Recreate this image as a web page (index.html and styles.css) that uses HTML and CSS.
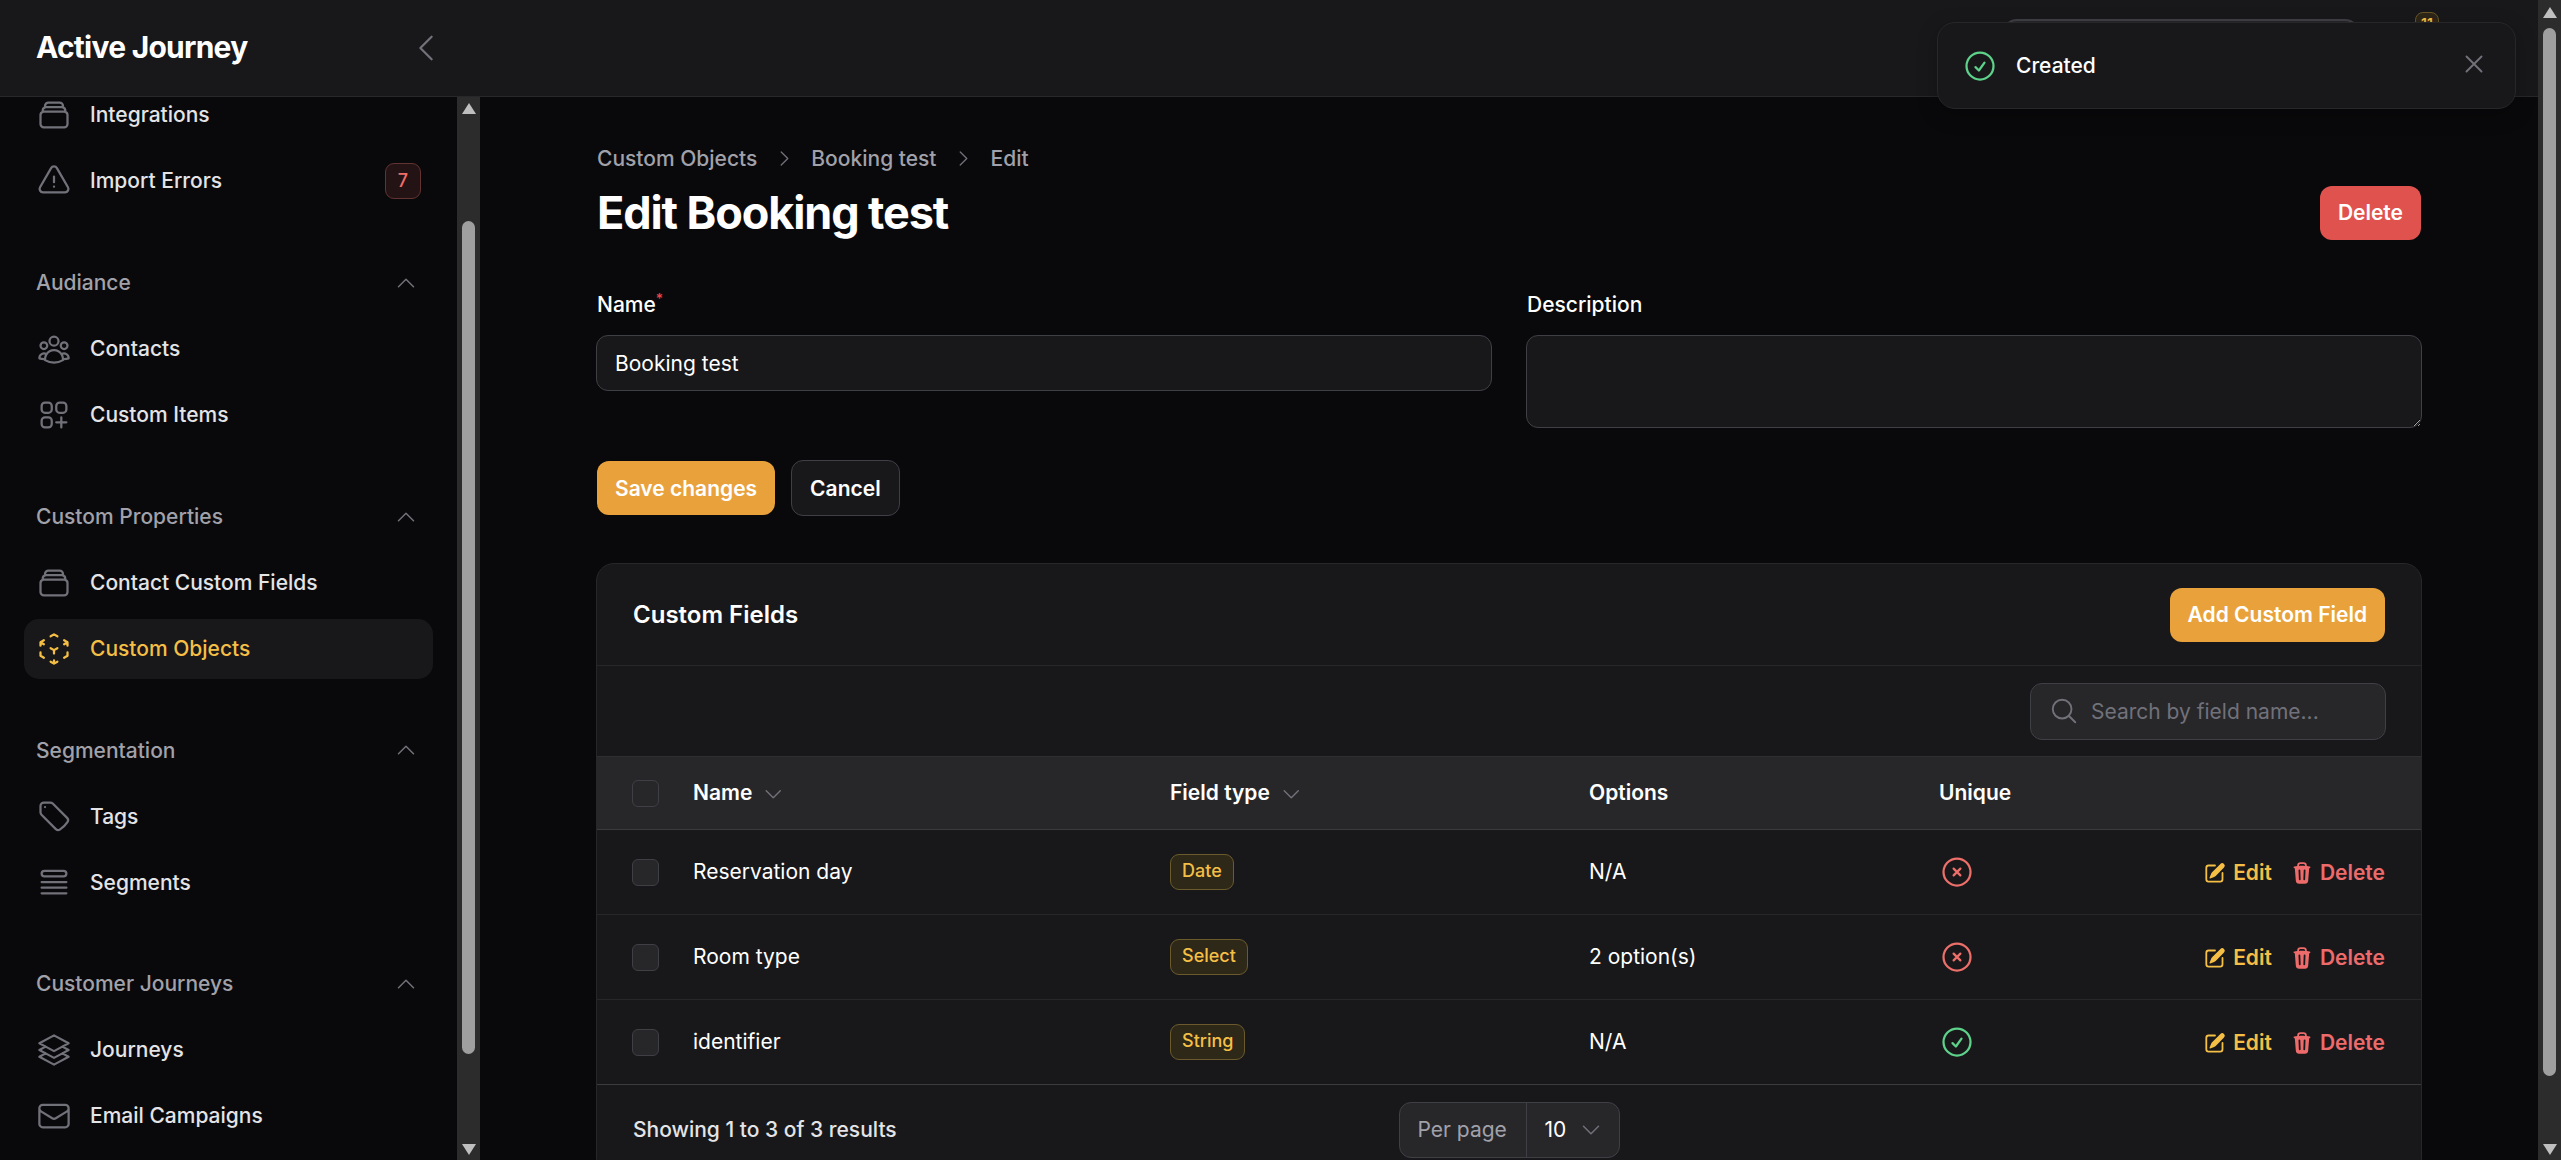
FILE: index.html
```html
<!DOCTYPE html>
<html lang="en">
<head>
    <meta charset="UTF-8">
    <meta name="viewport" content="width=device-width, initial-scale=1.0">
    <title>Edit Booking test</title>
    <link rel="stylesheet" href="styles.css">
</head>
<body>
    <svg class="sprite" xmlns="http://www.w3.org/2000/svg">
        <symbol id="i-stack" viewBox="0 0 24 24"><path d="M6 6.878V6a2.25 2.25 0 012.25-2.25h7.5A2.25 2.25 0 0118 6v.878m-12 0c.235-.083.487-.128.75-.128h10.5c.263 0 .515.045.75.128m-12 0A2.25 2.25 0 004.5 9v.878m13.5-3A2.25 2.25 0 0119.5 9v.878m0 0a2.246 2.246 0 00-.75-.128H5.25c-.263 0-.515.045-.75.128m15 0A2.25 2.25 0 0121 12v6a2.25 2.25 0 01-2.25 2.25H5.25A2.25 2.25 0 013 18v-6c0-.98.626-1.813 1.5-2.122"/></symbol>
        <symbol id="i-up" viewBox="0 0 24 24"><path d="M4.5 15.75l7.5-7.5 7.5 7.5"/></symbol>
        <symbol id="i-down" viewBox="0 0 24 24"><path d="M19.5 8.25l-7.5 7.5-7.5-7.5"/></symbol>
        <symbol id="i-right" viewBox="0 0 24 24"><path d="M8.25 4.5l7.5 7.5-7.5 7.5"/></symbol>
        <symbol id="i-x-circle" viewBox="0 0 24 24"><path d="M9.75 9.75l4.5 4.5m0-4.5l-4.5 4.5M21 12a9 9 0 11-18 0 9 9 0 0118 0z"/></symbol>
        <symbol id="i-check-circle" viewBox="0 0 24 24"><path d="M9 12.75L11.25 15 15 9.75M21 12a9 9 0 11-18 0 9 9 0 0118 0z"/></symbol>
        <symbol id="i-edit" viewBox="0 0 20 20"><path d="M5.433 13.917l1.262-3.155A4 4 0 017.58 9.42l6.92-6.918a2.121 2.121 0 013 3l-6.92 6.918c-.383.383-.84.685-1.343.886l-3.154 1.262a.5.5 0 01-.65-.65z"/><path d="M3.5 5.75c0-.69.56-1.25 1.25-1.25H10A.75.75 0 0010 3H4.75A2.75 2.75 0 002 5.75v9.5A2.75 2.75 0 004.75 18h9.5A2.75 2.75 0 0017 15.25V10a.75.75 0 00-1.5 0v5.25c0 .69-.56 1.25-1.25 1.25h-9.5c-.69 0-1.25-.56-1.25-1.25v-9.5z"/></symbol>
        <symbol id="i-trash" viewBox="0 0 20 20"><path fill-rule="evenodd" clip-rule="evenodd" d="M8.75 1A2.75 2.75 0 006 3.75v.443c-.795.077-1.584.176-2.365.298a.75.75 0 10.23 1.482l.149-.022.841 10.518A2.75 2.75 0 007.596 19h4.807a2.75 2.75 0 002.742-2.53l.841-10.52.149.023a.75.75 0 00.23-1.482A41.03 41.03 0 0014 4.193V3.75A2.75 2.75 0 0011.25 1h-2.5zM10 4c.84 0 1.673.025 2.5.075V3.75c0-.69-.56-1.25-1.25-1.25h-2.5c-.69 0-1.25.56-1.25 1.25v.325C8.327 4.025 9.16 4 10 4zM8.58 7.72a.75.75 0 00-1.5.06l.3 7.5a.75.75 0 101.5-.06l-.3-7.5zm4.34.06a.75.75 0 10-1.5-.06l-.3 7.5a.75.75 0 101.5.06l.3-7.5z"/></symbol>
    </svg>

    <div class="app">
        <header class="topbar">
            <div class="brand">
                <span class="brand-name">Active Journey</span>
                <svg class="brand-toggle" viewBox="0 0 24 24"><path d="M15.75 19.5L8.25 12l7.5-7.5"/></svg>
            </div>
            <div class="top-search"></div>
            <div class="top-badge">11</div>
        </header>

        <div class="layout">
            <aside class="sidebar">
                <nav class="nav">
                    <ul class="nav-list nav-first">
                        <li class="nav-item"><svg class="nav-icon"><use href="#i-stack"/></svg>Integrations</li>
                        <li class="nav-item"><svg class="nav-icon" viewBox="0 0 24 24"><path d="M12 9v3.75m-9.303 3.376c-.866 1.5.217 3.374 1.948 3.374h14.71c1.73 0 2.813-1.874 1.948-3.374L13.949 3.378c-.866-1.5-3.032-1.5-3.898 0L2.697 16.126zM12 15.75h.007v.008H12v-.008z"/></svg>Import Errors<span class="nav-badge">7</span></li>
                    </ul>
                    <section class="nav-group">
                        <div class="nav-label">Audiance<svg class="nav-caret"><use href="#i-up"/></svg></div>
                        <ul class="nav-list">
                            <li class="nav-item"><svg class="nav-icon" viewBox="0 0 24 24"><path d="M18 18.72a9.094 9.094 0 003.741-.479 3 3 0 00-4.682-2.72m.94 3.198l.001.031c0 .225-.012.447-.037.666A11.944 11.944 0 0112 21c-2.17 0-4.207-.576-5.963-1.584A6.062 6.062 0 016 18.719m12 0a5.971 5.971 0 00-.941-3.197m0 0A5.995 5.995 0 0012 12.75a5.995 5.995 0 00-5.058 2.772m0 0a3 3 0 00-4.681 2.72 8.986 8.986 0 003.74.477m.94-3.197a5.971 5.971 0 00-.94 3.197M15 6.75a3 3 0 11-6 0 3 3 0 016 0zm6 3a2.25 2.25 0 11-4.5 0 2.25 2.25 0 014.5 0zm-13.5 0a2.25 2.25 0 11-4.5 0 2.25 2.25 0 014.5 0z"/></svg>Contacts</li>
                            <li class="nav-item"><svg class="nav-icon" viewBox="0 0 24 24"><path d="M13.5 16.875h3.375m0 0h3.375m-3.375 0V13.5m0 6.75v-3.375M6 10.5h2.25a2.25 2.25 0 002.25-2.25V6a2.25 2.25 0 00-2.25-2.25H6A2.25 2.25 0 003.75 6v2.25A2.25 2.25 0 006 10.5zm0 9.75h2.25A2.25 2.25 0 0010.5 18v-2.25a2.25 2.25 0 00-2.25-2.25H6a2.25 2.25 0 00-2.25 2.25V18A2.25 2.25 0 006 20.25zm9.75-9.75H18a2.25 2.25 0 002.25-2.25V6A2.25 2.25 0 0018 3.75h-2.25A2.25 2.25 0 0013.5 6v2.25a2.25 2.25 0 002.25 2.25z"/></svg>Custom Items</li>
                        </ul>
                    </section>
                    <section class="nav-group">
                        <div class="nav-label">Custom Properties<svg class="nav-caret"><use href="#i-up"/></svg></div>
                        <ul class="nav-list">
                            <li class="nav-item"><svg class="nav-icon"><use href="#i-stack"/></svg>Contact Custom Fields</li>
                            <li class="nav-item active"><svg class="nav-icon" viewBox="0 0 24 24"><path d="M21 7.5l-2.25-1.313M21 7.5v2.25m0-2.25l-2.25 1.313M3 7.5l2.25-1.313M3 7.5l2.25 1.313M3 7.5v2.25m9 3l2.25-1.313M12 12.75l-2.25-1.313M12 12.75V15m0 6.75l2.25-1.313M12 21.75V19.5m0 2.25l-2.25-1.313m0-16.875L12 2.25l2.25 1.313M21 14.25v2.25l-2.25 1.313m-13.5 0L3 16.5v-2.25"/></svg>Custom Objects</li>
                        </ul>
                    </section>
                    <section class="nav-group">
                        <div class="nav-label">Segmentation<svg class="nav-caret"><use href="#i-up"/></svg></div>
                        <ul class="nav-list">
                            <li class="nav-item"><svg class="nav-icon" viewBox="0 0 24 24"><path d="M9.568 3H5.25A2.25 2.25 0 003 5.25v4.318c0 .597.237 1.17.659 1.591l9.581 9.581c.699.699 1.78.872 2.607.33a18.095 18.095 0 005.223-5.223c.542-.827.369-1.908-.33-2.607L11.16 3.66A2.25 2.25 0 009.568 3z"/><path d="M6 6h.008v.008H6V6z"/></svg>Tags</li>
                            <li class="nav-item"><svg class="nav-icon" viewBox="0 0 24 24"><path d="M3.75 12h16.5m-16.5 3.75h16.5m-16.5 3.75h16.5M5.625 4.5h12.75a1.875 1.875 0 010 3.75H5.625a1.875 1.875 0 010-3.75z"/></svg>Segments</li>
                        </ul>
                    </section>
                    <section class="nav-group">
                        <div class="nav-label">Customer Journeys<svg class="nav-caret"><use href="#i-up"/></svg></div>
                        <ul class="nav-list">
                            <li class="nav-item"><svg class="nav-icon" viewBox="0 0 24 24"><path d="M6.429 9.75L2.25 12l4.179 2.25m0-4.5l5.571 3 5.571-3m-11.142 0L2.25 7.5 12 2.25l9.75 5.25-4.179 2.25m0 0L21.75 12l-4.179 2.25m0 0l4.179 2.25L12 21.75 2.25 16.5l4.179-2.25m11.142 0l-5.571 3-5.571-3"/></svg>Journeys</li>
                            <li class="nav-item"><svg class="nav-icon" viewBox="0 0 24 24"><path d="M21.75 6.75v10.5a2.25 2.25 0 01-2.25 2.25h-15a2.25 2.25 0 01-2.25-2.25V6.75m19.5 0A2.25 2.25 0 0019.5 4.5h-15a2.25 2.25 0 00-2.25 2.25m19.5 0v.243a2.25 2.25 0 01-1.07 1.916l-7.5 4.615a2.25 2.25 0 01-2.36 0L3.32 8.91a2.25 2.25 0 01-1.07-1.916V6.75"/></svg>Email Campaigns</li>
                        </ul>
                    </section>
                </nav>
                <div class="scrollbar side-scroll"><span class="arrow-up"></span><span class="thumb"></span><span class="arrow-down"></span></div>
            </aside>

            <main class="main">
                <div class="breadcrumbs">
                    <span>Custom Objects</span><svg class="crumb-sep"><use href="#i-right"/></svg>
                    <span>Booking test</span><svg class="crumb-sep"><use href="#i-right"/></svg>
                    <span>Edit</span>
                </div>
                <div class="page-head">
                    <h1>Edit Booking test</h1>
                    <button class="btn btn-danger" type="button">Delete</button>
                </div>

                <form class="form-grid">
                    <div class="field">
                        <label for="name">Name<sup class="req">*</sup></label>
                        <input id="name" type="text" value="Booking test">
                    </div>
                    <div class="field">
                        <label for="description">Description</label>
                        <textarea id="description"></textarea>
                    </div>
                </form>
                <div class="form-actions">
                    <button class="btn btn-primary" type="button">Save changes</button>
                    <button class="btn btn-ghost" type="button">Cancel</button>
                </div>

                <section class="card">
                    <div class="card-head">
                        <h2>Custom Fields</h2>
                        <button class="btn btn-primary" type="button">Add Custom Field</button>
                    </div>
                    <div class="card-tools">
                        <div class="search">
                            <svg class="search-icon" viewBox="0 0 24 24"><path d="M21 21l-5.197-5.197m0 0A7.5 7.5 0 105.196 5.196a7.5 7.5 0 0010.607 10.607z"/></svg>
                            <input type="text" placeholder="Search by field name...">
                        </div>
                    </div>
                    <table class="fields">
                        <colgroup>
                            <col class="col-check"><col class="col-name"><col class="col-type"><col class="col-options"><col class="col-unique"><col>
                        </colgroup>
                        <thead>
                            <tr>
                                <th><span class="check"></span></th>
                                <th>Name<svg class="sort"><use href="#i-down"/></svg></th>
                                <th>Field type<svg class="sort"><use href="#i-down"/></svg></th>
                                <th>Options</th>
                                <th>Unique</th>
                                <th></th>
                            </tr>
                        </thead>
                        <tbody>
                            <tr>
                                <td><span class="check"></span></td>
                                <td>Reservation day</td>
                                <td><span class="tag">Date</span></td>
                                <td>N/A</td>
                                <td><svg class="state state-no"><use href="#i-x-circle"/></svg></td>
                                <td class="actions"><a class="act act-edit"><svg><use href="#i-edit"/></svg>Edit</a><a class="act act-del"><svg><use href="#i-trash"/></svg>Delete</a></td>
                            </tr>
                            <tr>
                                <td><span class="check"></span></td>
                                <td>Room type</td>
                                <td><span class="tag">Select</span></td>
                                <td>2 option(s)</td>
                                <td><svg class="state state-no"><use href="#i-x-circle"/></svg></td>
                                <td class="actions"><a class="act act-edit"><svg><use href="#i-edit"/></svg>Edit</a><a class="act act-del"><svg><use href="#i-trash"/></svg>Delete</a></td>
                            </tr>
                            <tr>
                                <td><span class="check"></span></td>
                                <td>identifier</td>
                                <td><span class="tag">String</span></td>
                                <td>N/A</td>
                                <td><svg class="state state-yes"><use href="#i-check-circle"/></svg></td>
                                <td class="actions"><a class="act act-edit"><svg><use href="#i-edit"/></svg>Edit</a><a class="act act-del"><svg><use href="#i-trash"/></svg>Delete</a></td>
                            </tr>
                        </tbody>
                    </table>
                    <div class="card-foot">
                        <span class="results">Showing 1 to 3 of 3 results</span>
                        <div class="per-page">
                            <span class="per-label">Per page</span>
                            <span class="per-value">10<svg class="per-caret"><use href="#i-down"/></svg></span>
                        </div>
                    </div>
                </section>
            </main>
        </div>
    </div>

    <div class="scrollbar page-scroll"><span class="arrow-up"></span><span class="thumb"></span><span class="arrow-down"></span></div>

    <div class="toast">
        <svg class="toast-icon"><use href="#i-check-circle"/></svg>
        <span class="toast-text">Created</span>
        <svg class="toast-close" viewBox="0 0 24 24"><path d="M6 18L18 6M6 6l12 12"/></svg>
    </div>
</body>
</html>
```

FILE: styles.css
```css
* {
    box-sizing: border-box;
}
html, body {
    height: 100%;
}
body {
    margin: 0;
    display: flex;
    overflow: hidden;
    background-color: #09090b;
    color: #fff;
    font-family: Inter, "Noto Sans", sans-serif;
    font-size: 21px;
    line-height: 31.5px;
}
svg {
    fill: none;
    stroke: currentColor;
    stroke-width: 1.5;
    stroke-linecap: round;
    stroke-linejoin: round;
    flex: none;
}
ul {
    list-style: none;
    margin: 0;
    padding: 0;
}
.sprite {
    display: none;
}
.app {
    flex: 1;
    min-width: 0;
    display: flex;
    flex-direction: column;
}

/* top bar */
.topbar {
    height: 97px;
    flex: none;
    display: flex;
    align-items: center;
    background-color: #18181b;
    border-bottom: 1px solid #27272a;
}
.brand {
    width: 458px;
    flex: none;
    display: flex;
    align-items: center;
    justify-content: space-between;
    padding: 0 14px 0 36px;
}
.brand-name {
    font-size: 30px;
    font-weight: 700;
    letter-spacing: -0.75px;
}
.brand-toggle {
    width: 36px;
    height: 36px;
    color: #71717a;
}
.top-search {
    width: 358px;
    height: 58px;
    margin-left: 1544px;
    background-color: #27272a;
    border: 2px solid #3f3f46;
    border-radius: 15px;
}
.top-badge {
    width: 24px;
    height: 24px;
    margin: -48px 0 0 55px;
    border: 1px solid #6b5526;
    border-radius: 8px;
    background-color: #2e2718;
    color: #f5bf45;
    font-size: 14px;
    font-weight: 600;
    line-height: 22px;
    text-align: center;
}

.layout {
    flex: 1;
    min-height: 0;
    display: flex;
}

/* sidebar */
.sidebar {
    width: 480px;
    flex: none;
    display: flex;
    overflow: hidden;
}
.nav {
    flex: 1;
    min-width: 0;
    padding: 0 24px;
    overflow: hidden;
}
.nav-first {
    margin-top: -12px;
}
.nav-list {
    display: flex;
    flex-direction: column;
    gap: 6px;
}
.nav-item {
    height: 60px;
    display: flex;
    align-items: center;
    gap: 18px;
    padding: 0 12px;
    border-radius: 15px;
    color: #e4e4e7;
    font-weight: 500;
}
.nav-item.active {
    background-color: #18181b;
    color: #f5bf45;
}
.nav-icon {
    width: 36px;
    height: 36px;
    color: #71717a;
}
.nav-item.active .nav-icon {
    color: #f5bf45;
}
.nav-badge {
    width: 36px;
    height: 36px;
    margin-left: auto;
    border: 1.5px solid #633232;
    border-radius: 9px;
    background-color: #241314;
    color: #f26d68;
    font-size: 18px;
    line-height: 33px;
    text-align: center;
}
.nav-group {
    margin-top: 53.8px;
}
.nav-label {
    height: 36px;
    display: flex;
    align-items: center;
    justify-content: space-between;
    margin-bottom: 18px;
    padding: 0 12px;
    color: #a1a1aa;
    font-weight: 500;
}
.nav-caret {
    width: 24px;
    height: 24px;
    margin-right: 3px;
    color: #71717a;
}

/* fake scrollbars, the browser hides its own in this capture */
.scrollbar {
    width: 23px;
    flex: none;
    display: flex;
    flex-direction: column;
    align-items: center;
    justify-content: space-between;
    background-color: #2c2c2c;
    padding: 7px 0 5px;
}
.thumb {
    width: 13px;
    border-radius: 7px;
    background-color: #9f9f9f;
}
.arrow-up, .arrow-down {
    width: 0;
    height: 0;
    border-left: 7px solid transparent;
    border-right: 7px solid transparent;
}
.arrow-up {
    border-bottom: 11px solid #bfbfbf;
}
.arrow-down {
    border-top: 11px solid #bfbfbf;
}
.side-scroll {
    padding-top: 6px;
}
.side-scroll .thumb {
    height: 833px;
    margin-top: 106px;
    margin-bottom: 90px;
}
.page-scroll .thumb {
    height: 1048px;
    margin-top: 10px;
    margin-bottom: 68px;
}

/* main */
.main {
    flex: 1;
    min-width: 0;
    padding: 46px 116px 0 117px;
    overflow: hidden;
}
.breadcrumbs {
    display: flex;
    align-items: center;
    color: #a1a1aa;
    font-weight: 500;
}
.crumb-sep {
    width: 21px;
    height: 21px;
    margin: 0 16.5px;
    color: #71717a;
}
.page-head {
    display: flex;
    align-items: center;
    justify-content: space-between;
    margin-top: 11px;
}
h1 {
    margin: 0;
    font-size: 45px;
    line-height: 54px;
    font-weight: 700;
    letter-spacing: -1.1px;
}
.btn {
    height: 54px;
    padding: 0 18px;
    border: none;
    border-radius: 12px;
    color: #fff;
    font-family: inherit;
    font-size: 21px;
    font-weight: 600;
}
.btn-danger {
    margin-right: 1px;
    background-color: #e0524e;
}
.btn-primary {
    background-color: #e9a23b;
}
.btn-ghost {
    height: 56px;
    background-color: #18181b;
    border: 1.5px solid #3f3f46;
}
.form-grid {
    display: grid;
    grid-template-columns: 1fr 1fr;
    column-gap: 34px;
    margin: 49.5px 0 0 -1px;
}
.field label {
    display: block;
    margin: 0 0 14.5px 1px;
    font-weight: 500;
}
.req {
    color: #ef4444;
    font-size: 14px;
    line-height: 0;
}
.field input, .field textarea {
    display: block;
    width: 100%;
    border: 1.5px solid #3f3f46;
    border-radius: 12px;
    background-color: #18181b;
    color: #fff;
    font-family: inherit;
    font-size: 21px;
    padding: 0 18px;
    outline: none;
}
.field input {
    height: 56px;
}
.field textarea {
    height: 93px;
    resize: vertical;
    color-scheme: dark;
}
.form-actions {
    display: flex;
    align-items: center;
    gap: 16px;
    margin-top: 32px;
}

/* custom fields card */
.card {
    margin: 47px 0 0 -1px;
    border: 1.5px solid #27272a;
    border-radius: 18px;
    background-color: #18181b;
    overflow: hidden;
}
.card-head {
    height: 102px;
    display: flex;
    align-items: center;
    justify-content: space-between;
    padding: 0 36px;
    border-bottom: 1.5px solid #27272a;
}
h2 {
    margin: 0;
    font-size: 24px;
    font-weight: 600;
}
.card-tools {
    height: 90px;
    display: flex;
    align-items: center;
    justify-content: flex-end;
    padding: 0 35px;
}
.search {
    width: 356px;
    height: 57px;
    display: flex;
    align-items: center;
    gap: 10px;
    padding: 0 18px;
    border: 1.5px solid #3f3f46;
    border-radius: 12px;
    background-color: #27272a;
}
.search-icon {
    width: 30px;
    height: 30px;
    color: #71717a;
}
.search input {
    flex: 1;
    min-width: 0;
    border: none;
    background: none;
    color: #fff;
    font-family: inherit;
    font-size: 21px;
    outline: none;
}
.search input::placeholder {
    color: #71717a;
}
.fields {
    width: 100%;
    table-layout: fixed;
    border-collapse: collapse;
}
.col-check {
    width: 96px;
}
.col-name {
    width: 477px;
}
.col-type {
    width: 419px;
}
.col-options {
    width: 350px;
}
.col-unique {
    width: 200px;
}
.fields th {
    height: 73px;
    padding: 0;
    background-color: #27272a;
    border-top: 1.5px solid #2f2f33;
    border-bottom: 1.5px solid #3a3a3f;
    text-align: left;
    font-weight: 600;
}
.fields td {
    height: 85px;
    padding: 0;
    border-bottom: 1.5px solid #27272a;
    font-weight: 400;
}
.fields tr:last-child td {
    border-bottom-color: #3a3a3f;
}
.fields th:first-child, .fields td:first-child {
    padding-left: 35px;
}
.check {
    display: block;
    width: 27px;
    height: 27px;
    border: 1.5px solid #3f3f46;
    border-radius: 6px;
    background-color: #27272a;
}
.sort {
    width: 22.5px;
    height: 22.5px;
    margin-left: 10px;
    vertical-align: -5px;
    color: #71717a;
}
.tag {
    display: inline-block;
    height: 36px;
    padding: 0 11px;
    border: 1.5px solid #6b5a2c;
    border-radius: 9px;
    background-color: #2e2819;
    color: #f5bf45;
    font-size: 18px;
    font-weight: 500;
    line-height: 32px;
    vertical-align: middle;
}
.state {
    display: block;
    width: 36px;
    height: 36px;
}
.state-no {
    color: #ec6f6a;
}
.state-yes {
    color: #5ed28a;
}
.actions {
    padding-right: 36px !important;
    text-align: right;
    white-space: nowrap;
}
.act {
    display: inline-flex;
    align-items: center;
    gap: 6px;
    margin-left: 18px;
    vertical-align: middle;
    font-weight: 600;
}
.act svg {
    width: 24px;
    height: 24px;
    fill: currentColor;
    stroke: none;
}
.act-edit {
    color: #f5bf45;
}
.act-del {
    color: #ee6b6b;
}
.card-foot {
    height: 90px;
    display: grid;
    grid-template-columns: 1fr auto 1fr;
    align-items: center;
    padding: 0 36px;
}
.results {
    color: #e4e4e7;
    font-weight: 500;
}
.per-page {
    width: 221px;
    height: 56px;
    display: flex;
    align-items: center;
    border: 1.5px solid #3f3f46;
    border-radius: 12px;
    background-color: #27272a;
}
.per-label {
    width: 127px;
    height: 100%;
    padding-left: 18px;
    border-right: 1.5px solid #3f3f46;
    color: #a1a1aa;
    line-height: 53px;
}
.per-value {
    flex: 1;
    display: flex;
    align-items: center;
    justify-content: space-between;
    padding: 0 16px 0 18px;
}
.per-caret {
    width: 24px;
    height: 24px;
    color: #71717a;
}

/* toast sits over the top bar */
.toast {
    position: absolute;
    top: 22px;
    left: 1937px;
    width: 579px;
    height: 87px;
    display: flex;
    align-items: center;
    padding: 0 24px;
    gap: 18px;
    border: 1.5px solid #27272a;
    border-radius: 18px;
    background-color: #18181b;
    box-shadow: 0 6px 20px rgba(0, 0, 0, 0.25);
}
.toast-icon {
    width: 36px;
    height: 36px;
    color: #5ed28a;
}
.toast-text {
    flex: 1;
    font-weight: 500;
}
.toast-close {
    width: 30px;
    height: 30px;
    margin: -4px 2px 0 0;
    color: #71717a;
}
```
